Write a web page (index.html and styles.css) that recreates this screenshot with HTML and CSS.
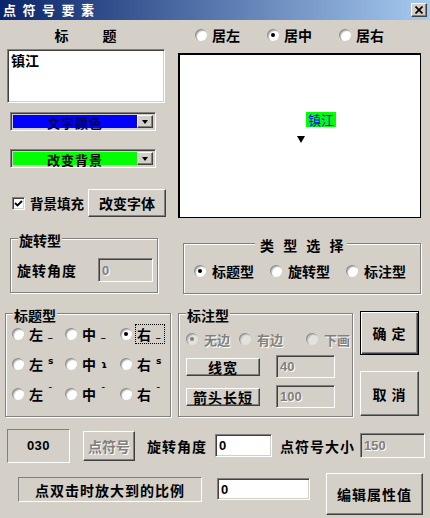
FILE: index.html
```html
<!DOCTYPE html>
<html lang="zh-CN">
<head>
    <meta charset="UTF-8">
    <meta name="viewport" content="width=device-width, initial-scale=1.0">
    <title>点符号要素</title>
    <link rel="stylesheet" href="styles.css">
</head>
<body>

<div class="titlebar">
    <span class="title">点符号要素</span>
    <span class="close-btn raised">
        <svg width="8" height="8" viewBox="0 0 8 8"><path d="M0.5 0.5 L7.5 7.5 M7.5 0.5 L0.5 7.5" stroke="#000" stroke-width="1.7"/></svg>
    </span>
</div>

<div class="top">
    <div class="left-col">
        <div class="caption"><span>标</span><span>题</span></div>
        <div class="textbox sunken">镇江</div>

        <div class="combo sunken">
            <span class="combo-text fill-blue">文字颜色</span>
            <span class="drop raised"><span class="arrow"></span></span>
        </div>
        <div class="combo combo-second sunken">
            <span class="combo-text fill-green">改变背景</span>
            <span class="drop raised"><span class="arrow"></span></span>
        </div>

        <div class="check-row">
            <span class="checkbox sunken">
                <svg width="9" height="9" viewBox="0 0 9 9"><path d="M1 4 L3.5 6.5 L8 2" stroke="#000" stroke-width="1.8" fill="none"/></svg>
            </span>
            <span class="check-label">背景填充</span>
            <button class="btn raised font-btn">改变字体</button>
        </div>

        <div class="group rotate-group">
            <span class="legend">旋转型</span>
            <span>旋转角度</span>
            <span class="field field-off sunken rotate-field">0</span>
        </div>
    </div>

    <div class="right-col">
        <div class="align-row">
            <label class="opt"><span class="radio"></span>居左</label>
            <label class="opt"><span class="radio on"></span>居中</label>
            <label class="opt"><span class="radio"></span>居右</label>
        </div>

        <div class="preview">
            <span class="preview-label">镇江</span>
            <span class="preview-pin"></span>
        </div>

        <div class="group type-group">
            <span class="legend type-legend">类 型 选 择</span>
            <label class="opt"><span class="radio on"></span>标题型</label>
            <label class="opt"><span class="radio"></span>旋转型</label>
            <label class="opt"><span class="radio"></span>标注型</label>
        </div>
    </div>
</div>

<div class="middle">
    <div class="group title-group">
        <span class="legend">标题型</span>
        <label class="opt"><span class="radio"></span><span class="pos">左<span class="mark low">_</span></span></label>
        <label class="opt"><span class="radio"></span><span class="pos">中<span class="mark low">_</span></span></label>
        <label class="opt"><span class="radio on"></span><span class="pos focus">右<span class="mark low">_</span></span></label>
        <label class="opt"><span class="radio"></span><span class="pos">左<span class="mark high">s</span></span></label>
        <label class="opt"><span class="radio"></span><span class="pos">中<span class="mark mid">ɿ</span></span></label>
        <label class="opt"><span class="radio"></span><span class="pos">右<span class="mark high">s</span></span></label>
        <label class="opt"><span class="radio"></span><span class="pos">左<span class="mark high">¯</span></span></label>
        <label class="opt"><span class="radio"></span><span class="pos">中<span class="mark high">¯</span></span></label>
        <label class="opt"><span class="radio"></span><span class="pos">右<span class="mark high">¯</span></span></label>
    </div>

    <div class="group mark-group">
        <span class="legend">标注型</span>
        <div class="mark-opts">
            <label class="opt mark-opt"><span class="radio on dim"></span><span class="off-text">无边</span></label>
            <label class="opt mark-opt"><span class="radio dim"></span><span class="off-text">有边</span></label>
            <label class="opt mark-opt"><span class="radio dim"></span><span class="off-text">下画</span></label>
        </div>
        <div class="mark-row">
            <button class="btn raised mark-btn">线宽</button>
            <span class="field field-off sunken mark-field">40</span>
        </div>
        <div class="mark-row">
            <button class="btn raised mark-btn">箭头长短</button>
            <span class="field field-off sunken mark-field">100</span>
        </div>
    </div>

    <div class="btn-col">
        <button class="btn default-btn">确 定</button>
        <button class="btn raised cancel-btn">取 消</button>
    </div>
</div>

<div class="bottom-row">
    <span class="static sunken code-box">030</span>
    <button class="btn raised symbol-btn"><span class="off-text">点符号</span></button>
    <span class="row-label">旋转角度</span>
    <span class="field sunken angle-field">0</span>
    <span class="row-label size-label">点符号大小</span>
    <span class="field field-off sunken size-field">150</span>
</div>

<div class="bottom-row2">
    <span class="static sunken scale-box">点双击时放大到的比例</span>
    <span class="field sunken scale-field">0</span>
    <button class="btn raised edit-btn">编辑属性值</button>
</div>

</body>
</html>
```

FILE: styles.css
```css
* {
    box-sizing: border-box;
}

body {
    margin: 0;
    width: 430px;
    height: 518px;
    overflow: hidden;
    background-color: #d4d0c8;
    font-family: "Noto Sans CJK SC", "Liberation Sans", sans-serif;
    font-size: 14px;
    font-weight: bold;
    color: #000;
    letter-spacing: 1px;
}

/* 3d borders, windows classic */
.raised {
    background-color: #d4d0c8;
    border: 1px solid;
    border-color: #fff #404040 #404040 #fff;
    box-shadow: inset -1px -1px 0 #808080;
}

.sunken {
    border: 1px solid;
    border-color: #808080 #fff #fff #808080;
    box-shadow: inset 1px 1px 0 #404040, inset -1px -1px 0 #d4d0c8;
}

.titlebar {
    height: 20px;
    display: flex;
    align-items: center;
    justify-content: space-between;
    padding: 0 3px;
    background: linear-gradient(to right, #0a246a, #a6caf0);
}

.title {
    color: #fff;
    font-size: 13px;
    letter-spacing: 6.5px;
    line-height: 20px;
}

.close-btn {
    width: 16px;
    height: 14px;
    display: flex;
    align-items: center;
    justify-content: center;
}

.top {
    display: flex;
    padding-left: 7px;
}

.left-col {
    width: 159px;
}

.right-col {
    width: 243px;
    margin-left: 12px;
}

.caption {
    height: 29px;
    display: flex;
    justify-content: center;
    align-items: center;
    gap: 33px;
    padding-right: 1px;
}

.textbox {
    width: 158px;
    height: 54px;
    background-color: #fff;
    padding: 2px 3px;
    line-height: 16px;
    letter-spacing: 0;
}

.combo {
    display: flex;
    width: 146px;
    height: 19px;
    margin: 9px 0 0 3px;
    padding: 2px;
}

.combo-second {
    margin-top: 18px;
}

.combo-text {
    flex: 1;
    text-align: center;
    line-height: 15px;
    font-size: 13px;
}

.fill-blue {
    background-color: #0000ff;
    color: #000060;
}

.fill-green {
    background-color: #00ff00;
}

.drop {
    width: 16px;
    display: flex;
    align-items: center;
    justify-content: center;
}

.arrow {
    border-left: 3.5px solid transparent;
    border-right: 3.5px solid transparent;
    border-top: 4px solid #000;
}

.check-row {
    display: flex;
    align-items: center;
    height: 28px;
    margin-top: 21px;
}

.checkbox {
    width: 13px;
    height: 13px;
    margin-left: 5px;
    background-color: #fff;
    display: flex;
    align-items: center;
    justify-content: center;
}

.check-label {
    margin-left: 5px;
    font-size: 13.5px;
    letter-spacing: 0;
    white-space: nowrap;
}

.btn {
    font-family: inherit;
    font-size: 14px;
    font-weight: bold;
    letter-spacing: 1px;
    color: #000;
    padding: 0;
}

.font-btn {
    width: 78px;
    height: 28px;
    margin-left: auto;
    letter-spacing: 0;
}

/* etched frames */
.group {
    position: relative;
    border: 1px solid #808080;
    box-shadow: 1px 1px 0 #fff, inset 1px 1px 0 #fff;
}

.legend {
    position: absolute;
    top: -6px;
    left: 7px;
    padding: 0 1px;
    line-height: 15px;
    background-color: #d4d0c8;
    letter-spacing: 0;
}

.rotate-group {
    width: 148px;
    height: 55px;
    margin: 21px 0 0 3px;
    display: flex;
    align-items: center;
    justify-content: space-between;
    padding: 9px 4px 0 6px;
}

.field {
    display: flex;
    align-items: center;
    padding-left: 3px;
    background-color: #fff;
    font-family: "Liberation Sans", sans-serif;
    font-size: 13px;
    letter-spacing: 0;
}

.field-off {
    background-color: #d4d0c8;
    color: #808080;
    text-shadow: 1px 1px 0 #fff;
}

.rotate-field {
    width: 55px;
    height: 24px;
}

.align-row {
    height: 33px;
    padding: 0 0 3px 17px;
    display: flex;
    align-items: center;
    gap: 27px;
}

.opt {
    display: flex;
    align-items: center;
    gap: 5px;
    letter-spacing: 0;
}

.radio {
    position: relative;
    flex: none;
    width: 12px;
    height: 12px;
    border-radius: 50%;
    background-color: #fff;
    box-shadow: inset 1px 1px 0 #909090, inset 2px 2px 1px #c0c0c0;
}

.radio.on::after {
    content: "";
    position: absolute;
    left: 4px;
    top: 4px;
    width: 4px;
    height: 4px;
    border-radius: 50%;
    background-color: #000;
}

.radio.dim {
    background-color: #e4e2dc;
}

.radio.dim::after {
    background-color: #808080;
}

.preview {
    position: relative;
    height: 165px;
    background-color: #fff;
    border: solid #000;
    border-width: 2px 1px 1px 2px;
}

.preview-label {
    position: absolute;
    left: 126px;
    top: 57px;
    padding: 0 2px;
    font-size: 13px;
    font-weight: normal;
    line-height: 15px;
    letter-spacing: 0;
    color: #0000ff;
    background-color: #00ff00;
}

.preview-pin {
    position: absolute;
    left: 117px;
    top: 81px;
    border-left: 4px solid transparent;
    border-right: 4px solid transparent;
    border-top: 7px solid #000;
}

.type-group {
    width: 238px;
    height: 51px;
    margin: 25px 0 0 5px;
    display: flex;
    align-items: center;
    gap: 16px;
    padding: 5px 0 0 10px;
}

.type-legend {
    left: 71px;
    padding: 0 0 0 5px;
    letter-spacing: 3px;
}

.type-group .opt {
    gap: 6px;
}

.middle {
    display: flex;
    align-items: flex-start;
    margin-top: 19px;
    padding-left: 5px;
}

.title-group {
    width: 166px;
    height: 104px;
    display: grid;
    grid-template-columns: 53px 55px 50px;
    grid-auto-rows: 30px;
    align-items: center;
    padding: 5px 0 0 6px;
}

.pos {
    display: flex;
    width: 26px;
    height: 16px;
    align-items: center;
    white-space: nowrap;
    line-height: 16px;
}

.pos.focus {
    outline: 1px dotted #000;
    outline-offset: 1px;
}

.mark {
    margin-left: 5px;
    font-family: "DejaVu Sans", sans-serif;
    font-size: 9px;
    line-height: 9px;
    letter-spacing: 0;
}

.mark.low {
    align-self: flex-end;
    margin-bottom: 3px;
}

.mark.high {
    align-self: flex-start;
    margin-top: 1px;
}

.mark.mid {
    font-size: 10px;
}

.mark-group {
    width: 175px;
    height: 104px;
    margin-left: 7px;
    padding: 16px 0 0 7px;
}

.mark-opts {
    display: flex;
    height: 18px;
    align-items: center;
}

.mark-opt {
    flex: none;
    gap: 6px;
    white-space: nowrap;
    font-size: 13px;
}

.mark-opt:nth-child(1) {
    width: 53px;
}

.mark-opt:nth-child(2) {
    width: 67px;
}

.off-text {
    color: #808080;
    text-shadow: 1px 1px 0 #fff;
}

.mark-row {
    display: flex;
    align-items: center;
    height: 23px;
    margin-top: 7px;
}

.mark-btn {
    width: 74px;
    height: 18px;
    line-height: 14px;
}

.mark-field {
    width: 59px;
    height: 23px;
    margin-left: 16px;
}

.btn-col {
    display: flex;
    flex-direction: column;
    width: 59px;
    margin: -2px 0 0 7px;
}

.default-btn {
    height: 44px;
    background-color: #d4d0c8;
    border: 1px solid #000;
    box-shadow: inset 1px 1px 0 #fff, inset -1px -1px 0 #404040, inset -2px -2px 0 #808080;
}

.cancel-btn {
    height: 45px;
    margin-top: 16px;
}

.bottom-row {
    display: flex;
    align-items: center;
    height: 35px;
    margin-top: 11px;
    padding-left: 7px;
}

.static {
    display: flex;
    align-items: center;
    justify-content: center;
    box-shadow: none;
}

.code-box {
    width: 63px;
    height: 34px;
    font-family: "Liberation Sans", sans-serif;
    font-size: 13px;
    letter-spacing: 0.5px;
}

.symbol-btn {
    width: 52px;
    height: 30px;
    margin-left: 13px;
    letter-spacing: 0;
}

.row-label {
    margin-left: 12px;
}

.size-label {
    margin-left: 8px;
}

.angle-field {
    width: 57px;
    height: 23px;
    margin-left: 8px;
}

.size-field {
    width: 65px;
    height: 25px;
    margin-left: 5px;
}

.bottom-row2 {
    display: flex;
    align-items: flex-start;
    height: 42px;
    margin-top: 10px;
    padding-left: 18px;
}

.scale-box {
    width: 184px;
    height: 25px;
    margin-top: 4px;
}

.scale-field {
    width: 93px;
    height: 22px;
    margin: 5px 0 0 15px;
}

.edit-btn {
    width: 97px;
    height: 42px;
    margin-left: 16px;
}
```
